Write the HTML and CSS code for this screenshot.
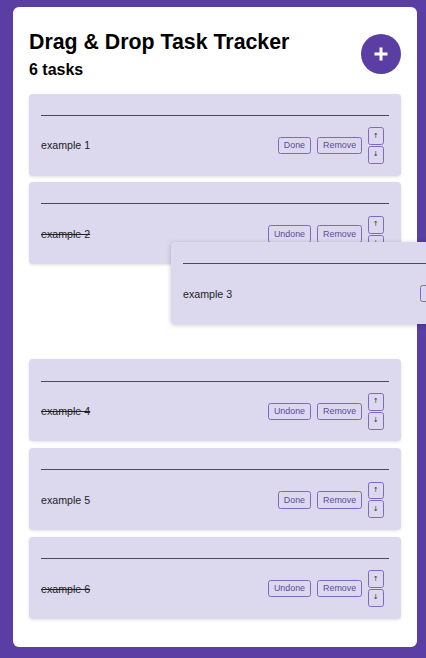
FILE: index.html
```html
<!DOCTYPE html>
<html lang="en">
<head>
<meta charset="utf-8">
<title>Drag &amp; Drop Task Tracker</title>
<link rel="stylesheet" href="styles.css">
</head>
<body>
<main class="panel">
  <header class="header">
    <div class="titles">
      <h1 class="title">Drag &amp; Drop Task Tracker</h1>
      <h2 class="count">6 tasks</h2>
    </div>
    <button class="add" aria-label="Add task">
      <svg width="16" height="16" viewBox="0 0 16 16"><path d="M8 1.5v13M1.5 8h13" stroke="#fff" stroke-width="3" stroke-linecap="butt"/></svg>
    </button>
  </header>
  <ul class="list">
    <li class="card">
      <hr class="rule">
      <div class="row"><span class="name">example 1</span><button class="btn">Done</button><button class="btn">Remove</button><div class="moves"><button class="mv">↑</button><button class="mv">↓</button></div></div>
    </li>
    <li class="card">
      <hr class="rule">
      <div class="row"><span class="name done">example 2</span><button class="btn">Undone</button><button class="btn">Remove</button><div class="moves"><button class="mv">↑</button><button class="mv">↓</button></div></div>
    </li>
    <li class="slot"></li>
    <li class="card">
      <hr class="rule">
      <div class="row"><span class="name done">example 4</span><button class="btn">Undone</button><button class="btn">Remove</button><div class="moves"><button class="mv">↑</button><button class="mv">↓</button></div></div>
    </li>
    <li class="card">
      <hr class="rule">
      <div class="row"><span class="name">example 5</span><button class="btn">Done</button><button class="btn">Remove</button><div class="moves"><button class="mv">↑</button><button class="mv">↓</button></div></div>
    </li>
    <li class="card">
      <hr class="rule">
      <div class="row"><span class="name done">example 6</span><button class="btn">Undone</button><button class="btn">Remove</button><div class="moves"><button class="mv">↑</button><button class="mv">↓</button></div></div>
    </li>
  </ul>
</main>
<div class="card dragging">
  <hr class="rule">
  <div class="row"><span class="name">example 3</span><button class="btn">Done</button><button class="btn">Remove</button><div class="moves"><button class="mv">↑</button><button class="mv">↓</button></div></div>
</div>
</body>
</html>
```
FILE: styles.css
```css
html, body {
  margin: 0;
  padding: 0;
  overflow: hidden;
  height: 658px;
}
body {
  background: #5a3ea3;
  font-family: "Liberation Sans", Arial, sans-serif;
  position: relative;
}
.panel {
  margin: 7px 9px 0 13px;
  background: #fff;
  border-radius: 6px;
  padding: 23px 16px 28px 16px;
}
.header {
  display: flex;
  align-items: center;
  justify-content: space-between;
}
.title {
  margin: 0;
  font-size: 21.33px;
  line-height: 24px;
  font-weight: bold;
  color: #000;
}
.count {
  margin: 6.5px 0 0;
  font-size: 16px;
  line-height: 18px;
  font-weight: bold;
  color: #000;
}
.add {
  width: 40px;
  height: 40px;
  border-radius: 50%;
  border: 0;
  padding: 0;
  background: #5a3ea3;
  display: flex;
  align-items: center;
  justify-content: center;
}
.list {
  list-style: none;
  margin: 15px 0 0;
  padding: 0;
  display: flex;
  flex-direction: column;
  gap: 6.67px;
}
.slot {
  height: 82px;
}
.card {
  box-sizing: border-box;
  height: 82px;
  width: 372px;
  background: #dcd9ef;
  border-radius: 4px;
  padding: 21.33px 12px 10px 12px;
  box-shadow: 0 1px 3px rgba(0, 0, 0, 0.12);
}
.rule {
  margin: 0 0 11.33px;
  border: 0;
  border-top: 1px solid #4a4a55;
  height: 0;
}
.row {
  display: flex;
  align-items: center;
  padding-right: 5px;
}
.name {
  flex: 1;
  font-size: 10.67px;
  color: #222;
}
.name.done {
  text-decoration: line-through;
}
.btn {
  font-family: "Liberation Sans", Arial, sans-serif;
  font-size: 8.9px;
  height: 17.3px;
  padding: 0 5px;
  margin-left: 6px;
  background: transparent;
  border: 1px solid #8068c4;
  border-radius: 2.67px;
  color: #5a4a9c;
  line-height: 1;
}
.moves {
  display: flex;
  flex-direction: column;
  gap: 1px;
  margin-left: 5.5px;
}
.mv {
  font-family: "DejaVu Sans", sans-serif;
  width: 16.4px;
  height: 17.7px;
  padding: 0;
  background: transparent;
  border: 1px solid #8068c4;
  border-radius: 2.67px;
  color: #333;
  font-size: 7px;
  line-height: 1;
}
.dragging {
  position: absolute;
  left: 171px;
  top: 241.7px;
  box-shadow: 0 1px 5px rgba(0, 0, 0, 0.22);
}
```
